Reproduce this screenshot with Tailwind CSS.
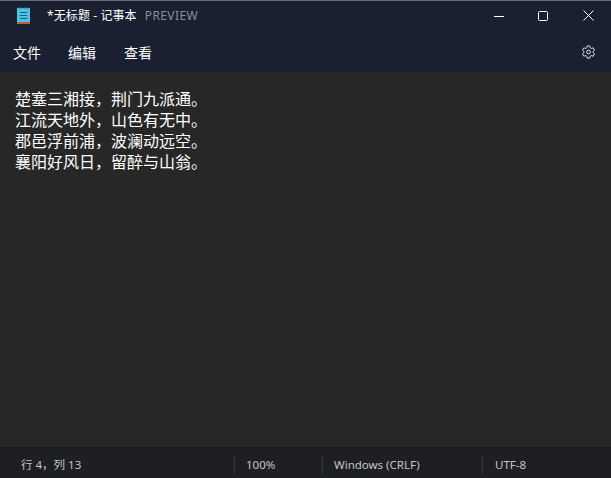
<!DOCTYPE html>
<html lang="zh-CN">
<head>
<meta charset="UTF-8">
<title>记事本</title>
<script src="https://cdn.jsdelivr.net/npm/@tailwindcss/browser@4"></script>
</head>
<body class="bg-[#272727] font-['Noto_Sans','Noto_Sans_CJK_SC',sans-serif]">
<div class="flex flex-col w-[611px] h-[478px] overflow-hidden">
  <!-- title bar -->
  <div class="flex items-center h-[32px] pb-[2px] bg-[#1a2032] border-t border-[#6a6c72] shrink-0">
    <svg class="ml-[17px] w-[13px] h-[17px]" viewBox="0 0 13 17">
      <rect x="0" y="1" width="13" height="15" fill="#4cc2e8"/>
      <rect x="0" y="15" width="13" height="2" fill="#b5672c"/>
      <path d="M2.500 0v2M5 0v2M8 0v2M10.500 0v2" stroke="#1d6f8c"/>
      <path d="M3 5.500h7M3 8.500h7M3 11.500h7" stroke="#13607d"/>
    </svg>
    <span class="ml-[17px] text-[12px] tracking-[0.1px] text-white">*无标题 - 记事本</span>
    <span class="ml-[8px] text-[12px] tracking-[0.4px] text-[#8b8e96]">PREVIEW</span>
    <div class="ml-auto flex items-center">
      <svg class="w-[10px] h-[10px] mr-[34px]" viewBox="0 0 10 10"><path d="M0 5.500h10" stroke="#fff"/></svg>
      <svg class="w-[10px] h-[10px] mr-[35px]" viewBox="0 0 10 10"><rect x=".5" y=".5" width="9" height="9" rx="1" fill="none" stroke="#fff"/></svg>
      <svg class="w-[11px] h-[11px] mr-[17px]" viewBox="0 0 11 11"><path d="M.5.5l10 10M10.500.5l-10 10" stroke="#fff" fill="none"/></svg>
    </div>
  </div>
  <!-- menu bar -->
  <div class="flex items-center h-[40px] bg-[#1a2032] shrink-0 text-[14px] text-white">
    <span class="ml-[13px]">文件</span>
    <span class="ml-[27px]">编辑</span>
    <span class="ml-[28px]">查看</span>
    <svg class="ml-auto mr-[15px] w-[15px] h-[15px]" viewBox="0 0 16 16" fill="none" stroke="#e6e7ea" stroke-width="1">
      <path d="M6.600 1h2.800l.4 2 1.300.7 1.900-.7 1.400 2.500-1.500 1.300v1.400l1.500 1.300-1.400 2.500-1.900-.7-1.300.7-.4 2H6.600l-.4-2-1.300-.7-1.900.7L1.600 9.500l1.500-1.300V6.800L1.600 5.500 3 3l1.900.7 1.300-.7z"/>
      <circle cx="8" cy="7.500" r="2"/>
    </svg>
  </div>
  <!-- editor -->
  <div class="flex-1 bg-[#272727] pt-[17px] pl-[15px] text-[16px] leading-[21px] text-white">
    <p>楚塞三湘接，荆门九派通。</p>
    <p>江流天地外，山色有无中。</p>
    <p>郡邑浮前浦，波澜动远空。</p>
    <p>襄阳好风日，留醉与山翁。</p>
  </div>
  <!-- status bar -->
  <div class="flex items-center h-[31px] pt-[3px] bg-[#1e1f22] border-t border-[#1a1a1c] shrink-0 text-[11.5px] text-[#c4c4c6]">
    <span class="w-[234px] pl-[21px]">行 4，列 13</span>
    <span class="w-[88px] h-[16px] flex items-center border-l border-[#38393c] pl-[11px]">100%</span>
    <span class="w-[160px] h-[16px] flex items-center border-l border-[#38393c] pl-[11px]">Windows (CRLF)</span>
    <span class="h-[16px] flex items-center border-l border-[#38393c] pl-[12px]">UTF-8</span>
  </div>
</div>
</body>
</html>
